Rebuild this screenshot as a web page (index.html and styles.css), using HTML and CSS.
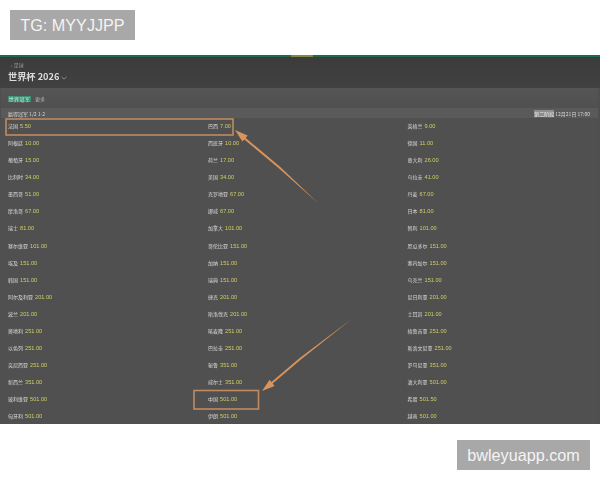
FILE: index.html
```html
<!DOCTYPE html>
<html lang="zh">
<head>
<meta charset="utf-8">
<title>世界杯 2026</title>
<link rel="stylesheet" href="styles.css">
</head>
<body>
<div class="top"><span class="mark mark-tg">TG: MYYJJPP</span></div>
<main class="shot">
  <div class="soft">
    <header class="head">
      <div class="crumb">‹ 足球</div>
      <h1 class="title">世界杯 2026 <svg class="chev" width="6" height="4" viewBox="0 0 6 4"><path d="M.5.8 3 3.2 5.5.8" fill="none" stroke="#aaa" stroke-width=".7"/></svg></h1>
    </header>
    <section class="panel">
      <div class="tabs"><span class="tab-on">世界冠军</span><span class="tab">更多</span></div>
      <div class="band"><span>赢得冠军 1/2 1-2</span><span><b class="stage">第二阶段</b> 12月21日 17:00</span></div>
      <div class="grid">
        <div class="row">法国<i>5.50</i></div><div class="row">巴西<i>7.00</i></div><div class="row">英格兰<i>9.00</i></div>
        <div class="row">阿根廷<i>10.00</i></div><div class="row">西班牙<i>10.00</i></div><div class="row">德国<i>11.00</i></div>
        <div class="row">葡萄牙<i>15.00</i></div><div class="row">荷兰<i>17.00</i></div><div class="row">意大利<i>26.00</i></div>
        <div class="row">比利时<i>34.00</i></div><div class="row">美国<i>34.00</i></div><div class="row">乌拉圭<i>41.00</i></div>
        <div class="row">墨西哥<i>51.00</i></div><div class="row">克罗地亚<i>67.00</i></div><div class="row">丹麦<i>67.00</i></div>
        <div class="row">摩洛哥<i>67.00</i></div><div class="row">挪威<i>67.00</i></div><div class="row">日本<i>81.00</i></div>
        <div class="row">瑞士<i>81.00</i></div><div class="row">加拿大<i>101.00</i></div><div class="row">智利<i>101.00</i></div>
        <div class="row">塞尔维亚<i>101.00</i></div><div class="row">哥伦比亚<i>151.00</i></div><div class="row">厄瓜多尔<i>151.00</i></div>
        <div class="row">埃及<i>151.00</i></div><div class="row">加纳<i>151.00</i></div><div class="row">塞内加尔<i>151.00</i></div>
        <div class="row">韩国<i>151.00</i></div><div class="row">瑞典<i>151.00</i></div><div class="row">乌克兰<i>151.00</i></div>
        <div class="row">阿尔及利亚<i>201.00</i></div><div class="row">捷克<i>201.00</i></div><div class="row">尼日利亚<i>201.00</i></div>
        <div class="row">波兰<i>201.00</i></div><div class="row">斯洛伐克<i>201.00</i></div><div class="row">土耳其<i>201.00</i></div>
        <div class="row">奥地利<i>251.00</i></div><div class="row">喀麦隆<i>251.00</i></div><div class="row">格鲁吉亚<i>251.00</i></div>
        <div class="row">以色列<i>251.00</i></div><div class="row">巴拉圭<i>251.00</i></div><div class="row">斯洛文尼亚<i>251.00</i></div>
        <div class="row">突尼西亚<i>251.00</i></div><div class="row">秘鲁<i>351.00</i></div><div class="row">罗马尼亚<i>351.00</i></div>
        <div class="row">新西兰<i>351.00</i></div><div class="row">威尔士<i>351.00</i></div><div class="row">澳大利亚<i>501.00</i></div>
        <div class="row">玻利维亚<i>501.00</i></div><div class="row">中国<i>501.00</i></div><div class="row">希腊<i>501.50</i></div>
        <div class="row">匈牙利<i>501.00</i></div><div class="row">伊朗<i>501.00</i></div><div class="row">越南<i>501.00</i></div>
      </div>
    </section>
  </div>
  <svg class="notes" width="600" height="369" viewBox="0 0 600 369">
    <rect x="6" y="64" width="227" height="16" fill="none" stroke="#c08a60" stroke-width="1.6"/>
    <rect x="194" y="335.5" width="64.5" height="18.5" fill="none" stroke="#c08a60" stroke-width="1.6"/>
    <path d="M235 75 247.600 80.600 245.700 82.900 280.600 112.300 319 149 279.400 113.700 244.300 84.400 242.400 86.600Z" fill="#d8945c"/>
    <path d="M262 336 269.600 324.700 271.500 327 299.400 303.300 353 263 300.600 304.700 272.700 328.600 274.600 330.900Z" fill="#d8945c"/>
  </svg>
</main>
<div class="bottom"><span class="mark mark-site">bwleyuapp.com</span></div>
</body>
</html>
```

FILE: styles.css
```css
* { box-sizing: border-box; }
html, body { margin: 0; padding: 0; }
body {
  width: 600px;
  height: 480px;
  overflow: hidden;
  background: #fff;
  font-family: "Noto Sans CJK SC", "Liberation Sans", sans-serif;
}
.top { height: 55px; padding: 10px 0 0 10px; }
.bottom { height: 56px; padding: 16px 10px 0 0; display: flex; justify-content: flex-end; }
.mark {
  display: flex;
  align-items: center;
  justify-content: center;
  height: 30px;
  background: #a8a8a8;
  color: #f4f4f4;
  font-family: "Liberation Sans", sans-serif;
  font-size: 16.2px;
}
.mark-tg { width: 125px; }
.mark-site { width: 133px; }
.shot { position: relative; height: 369px; overflow: hidden; background: #4f4f4f; }
.soft { filter: blur(.35px); }
.head {
  height: 33px;
  padding: 4px 0 0 8px;
  border-top: 2px solid #1d6a4c;
  background: linear-gradient(#3b3b3b, #414141);
  position: relative;
}
.head::after {
  content: "";
  position: absolute;
  top: -2px;
  left: 291px;
  width: 22px;
  height: 2px;
  background: #7f8c48;
}
.crumb { height: 7px; font-size: 5px; line-height: 7px; color: #9a9a9a; padding-left: 3px; }
.title {
  margin: 2px 0 0;
  font-size: 9.200px;
  line-height: 13px;
  font-weight: 700;
  color: #dcdcdc;
}
.chev { vertical-align: 0; }
.panel { margin: 0 2px 0 1px; background: #505050; }
.tabs {
  height: 20px;
  padding: 8px 0 0 7px;
  display: flex;
  align-items: flex-start;
  gap: 4px;
  font-size: 5px;
  line-height: 6px;
  color: #b8b8b8;
  background: linear-gradient(#555, #505050);
}
.tab-on { width: 23px; height: 6px; background: #3c9072; color: #d0e8df; text-align: center; letter-spacing: .4px; }
.band {
  height: 10px;
  padding: 0 8px 0 7px;
  display: flex;
  justify-content: space-between;
  align-items: center;
  background: #5a5a5a;
  font-size: 5px;
  color: #d8d8d8;
}
.stage { font-weight: 400; background: #8d8d8d; color: #e8e8e8; }
.grid {
  display: grid;
  grid-template-columns: 200px 199.500px 1fr;
  grid-auto-rows: 17.08px;
  padding-left: 7px;
}
.row { line-height: 16.500px; font-size: 5px; color: #dadada; white-space: nowrap; }
.row i { margin-left: 2px; font-style: normal; font-family: "Liberation Sans", sans-serif; color: #cfcf66; font-size: 5.600px; }
.notes { position: absolute; left: 0; top: 0; filter: blur(.3px); }
```
